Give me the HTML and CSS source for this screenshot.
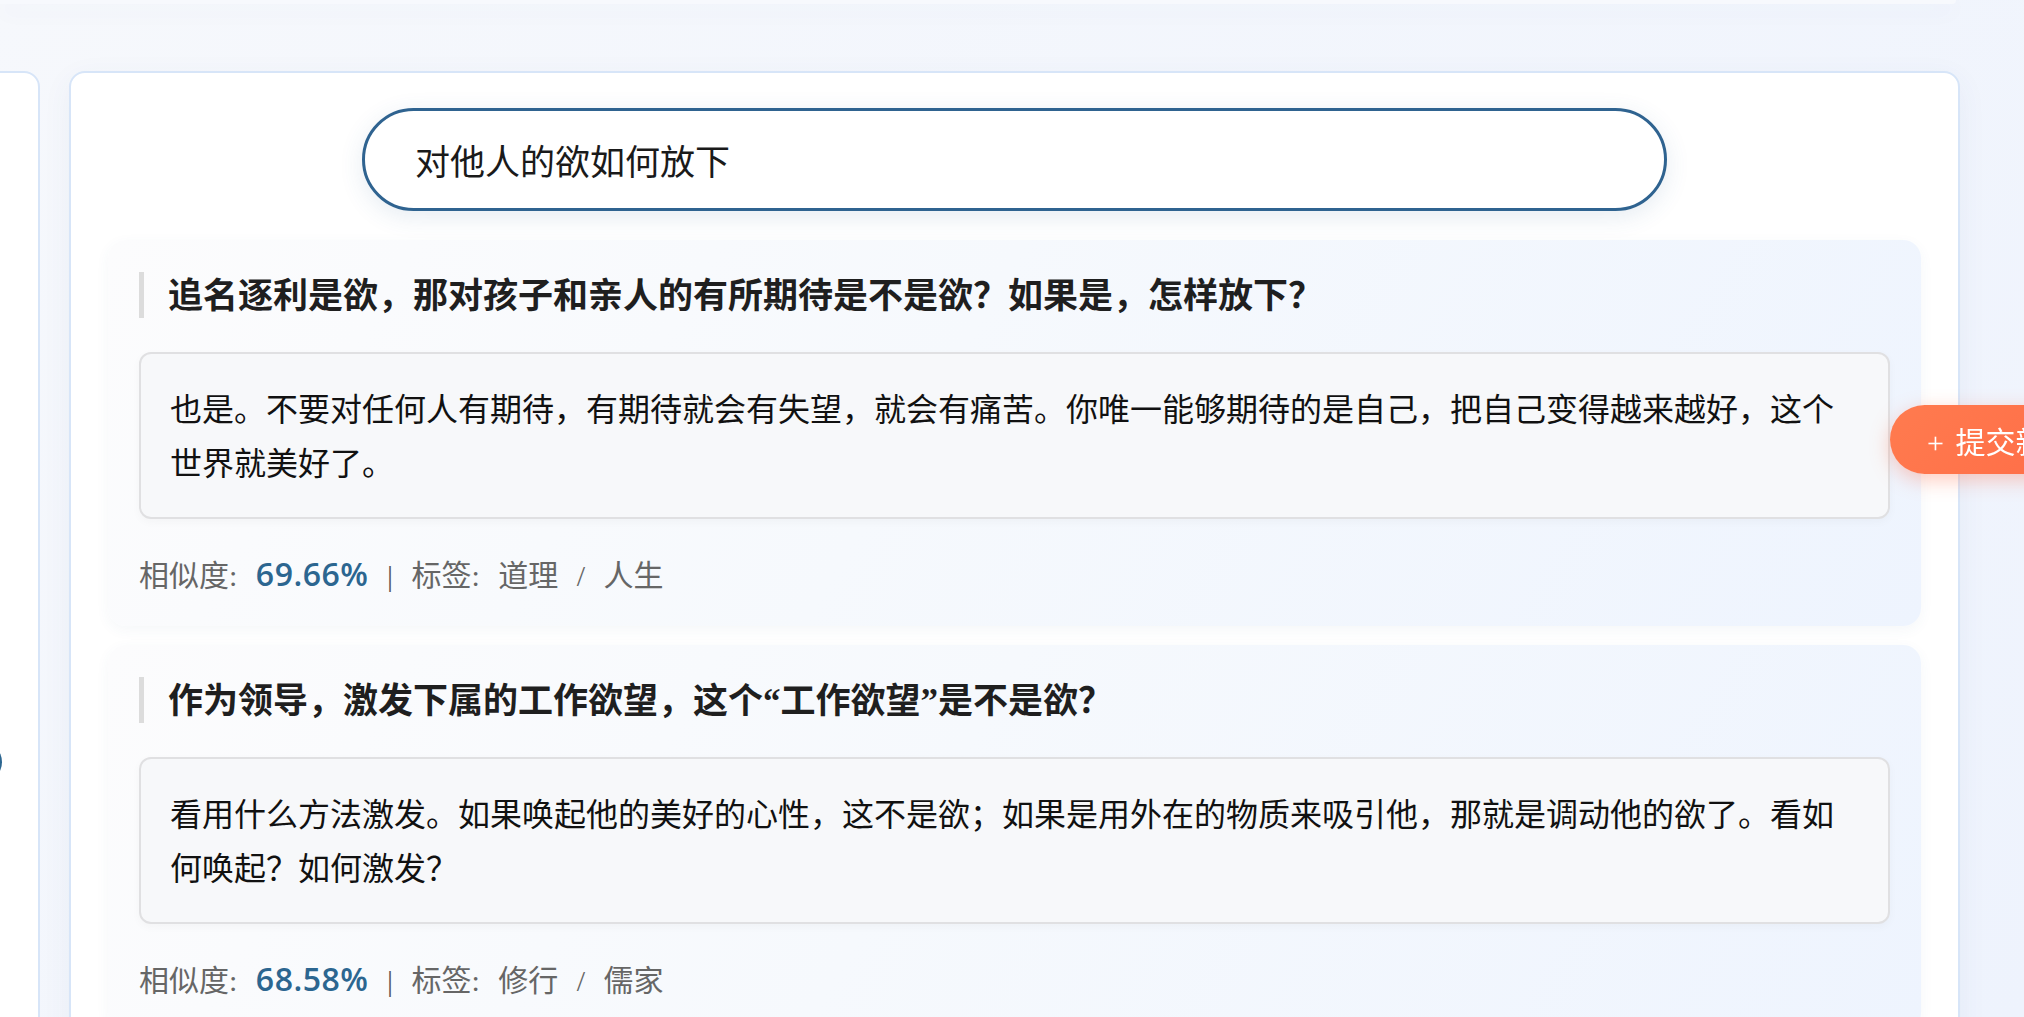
FILE: index.html
```html
<!DOCTYPE html>
<html lang="zh-CN">

<head>
    <meta charset="utf-8">
    <title>问答检索</title>
    <link rel="stylesheet" href="styles.css">
</head>

<body>

    <div class="topbar"></div>

    <div class="layout">
        <aside class="sidebar">
            <span class="side-dot"></span>
        </aside>

        <main class="panel">
            <div class="search">
                <input class="search-input" type="text" value="对他人的欲如何放下" autofocus>
            </div>

            <div class="results">
                <article class="result">
                    <h3 class="result-title">追名逐利是欲，那对孩子和亲人的有所期待是不是欲？如果是，怎样放下？</h3>
                    <div class="result-answer">也是。不要对任何人有期待，有期待就会有失望，就会有痛苦。你唯一能够期待的是自己，把自己变得越来越好，这个世界就美好了。</div>
                    <div class="result-meta">相似度: <span class="score">69.66%</span> <span class="sep">|</span> 标签: 道理 / 人生</div>
                </article>

                <article class="result">
                    <h3 class="result-title">作为领导，激发下属的工作欲望，这个“工作欲望”是不是欲？</h3>
                    <div class="result-answer">看用什么方法激发。如果唤起他的美好的心性，这不是欲；如果是用外在的物质来吸引他，那就是调动他的欲了。看如何唤起？如何激发？</div>
                    <div class="result-meta">相似度: <span class="score">68.58%</span> <span class="sep">|</span> 标签: 修行 / 儒家</div>
                </article>
            </div>
        </main>
    </div>

    <button class="fab">+ 提交新问题</button>

    <script>
        var input = document.querySelector('.search-input');
        input.focus();
        input.setSelectionRange(input.value.length, input.value.length);
    </script>
</body>

</html>
```

FILE: styles.css
```css
body {
    margin: 0;
    height: 100vh;
    overflow: hidden;
    font-family: "Liberation Serif", "Noto Sans CJK SC", serif;
    color: #1f1f1f;
    background: linear-gradient(135deg, #f6f8fc 0%, #eef3fd 100%);
}

.topbar {
    height: 4px;
    margin-right: 68px;
    background: #f7f9fd;
    border-radius: 0 0 16px 0;
    box-shadow: 0 6px 22px rgba(60, 90, 140, 0.08);
}

.layout {
    display: grid;
    grid-template-columns: 340px 1891px;
    column-gap: 29px;
    margin-top: 67px;
    margin-left: -300px;
}

.sidebar {
    height: 1200px;
    background: #ffffff;
    border: 2px solid #d7e5f8;
    border-radius: 16px;
    display: flex;
    flex-direction: column;
    align-items: flex-start;
}

.side-dot {
    width: 40px;
    height: 40px;
    margin-top: 669px;
    margin-left: 260px;
    border-radius: 50%;
    background: #2c6690;
}

.panel {
    background: #ffffff;
    border: 2px solid #d7e5f8;
    border-radius: 16px;
    padding: 35px 37px;
    box-shadow: 0 8px 30px rgba(60, 90, 140, 0.06);
}

.search-input {
    display: block;
    box-sizing: border-box;
    width: 1305px;
    height: 103px;
    margin: 0 auto;
    padding: 0 50px;
    border: 3px solid #2f6390;
    border-radius: 52px;
    background: #ffffff;
    font-family: "Noto Sans CJK SC", sans-serif;
    font-size: 35px;
    color: #1a1a1a;
    outline: none;
    caret-color: #111;
    box-shadow: 0 6px 24px rgba(47, 99, 144, 0.12);
}

.results {
    margin-top: 29px;
    display: flex;
    flex-direction: column;
    gap: 19px;
}

.result {
    padding: 32px 31px 30px;
    border-radius: 18px;
    background: linear-gradient(120deg, #fcfcfd 0%, #f6f9fd 45%, #eef4fe 100%);
    box-shadow: 0 4px 14px rgba(60, 90, 140, 0.05);
}

.result-title {
    margin: 0 0 34px;
    padding: 4px 0 0 24px;
    border-left: 5px solid #dcdcdc;
    font-size: 35px;
    line-height: 42px;
    font-weight: 700;
    color: #1f1f1f;
}

.result-answer {
    padding: 29px 29px 25px;
    border: 2px solid #e0e0e2;
    border-radius: 12px;
    background: #f7f8fa;
    font-size: 32px;
    line-height: 54.4px;
    color: #111;
    box-shadow: 0 3px 10px rgba(0, 0, 0, 0.03);
}

.result-meta {
    margin-top: 35px;
    font-size: 30px;
    line-height: 40px;
    word-spacing: 11px;
    color: #666;
}

.score {
    font-family: "Open Sans", sans-serif;
    font-weight: 600;
    font-size: 32px;
    letter-spacing: 0.5px;
    color: #2c6690;
}

.sep {
    color: #555;
}

.fab {
    position: fixed;
    top: 405px;
    left: 1890px;
    height: 69px;
    padding: 0 40px 0 37px;
    border: none;
    border-radius: 35px;
    background: linear-gradient(135deg, #ff7b4f 0%, #ff6a45 100%);
    color: #ffffff;
    font-family: "Liberation Serif", "Noto Sans CJK SC", serif;
    font-size: 30px;
    word-spacing: 4px;
    white-space: nowrap;
    cursor: pointer;
    box-shadow: 0 6px 20px rgba(255, 107, 69, 0.35);
}
```
